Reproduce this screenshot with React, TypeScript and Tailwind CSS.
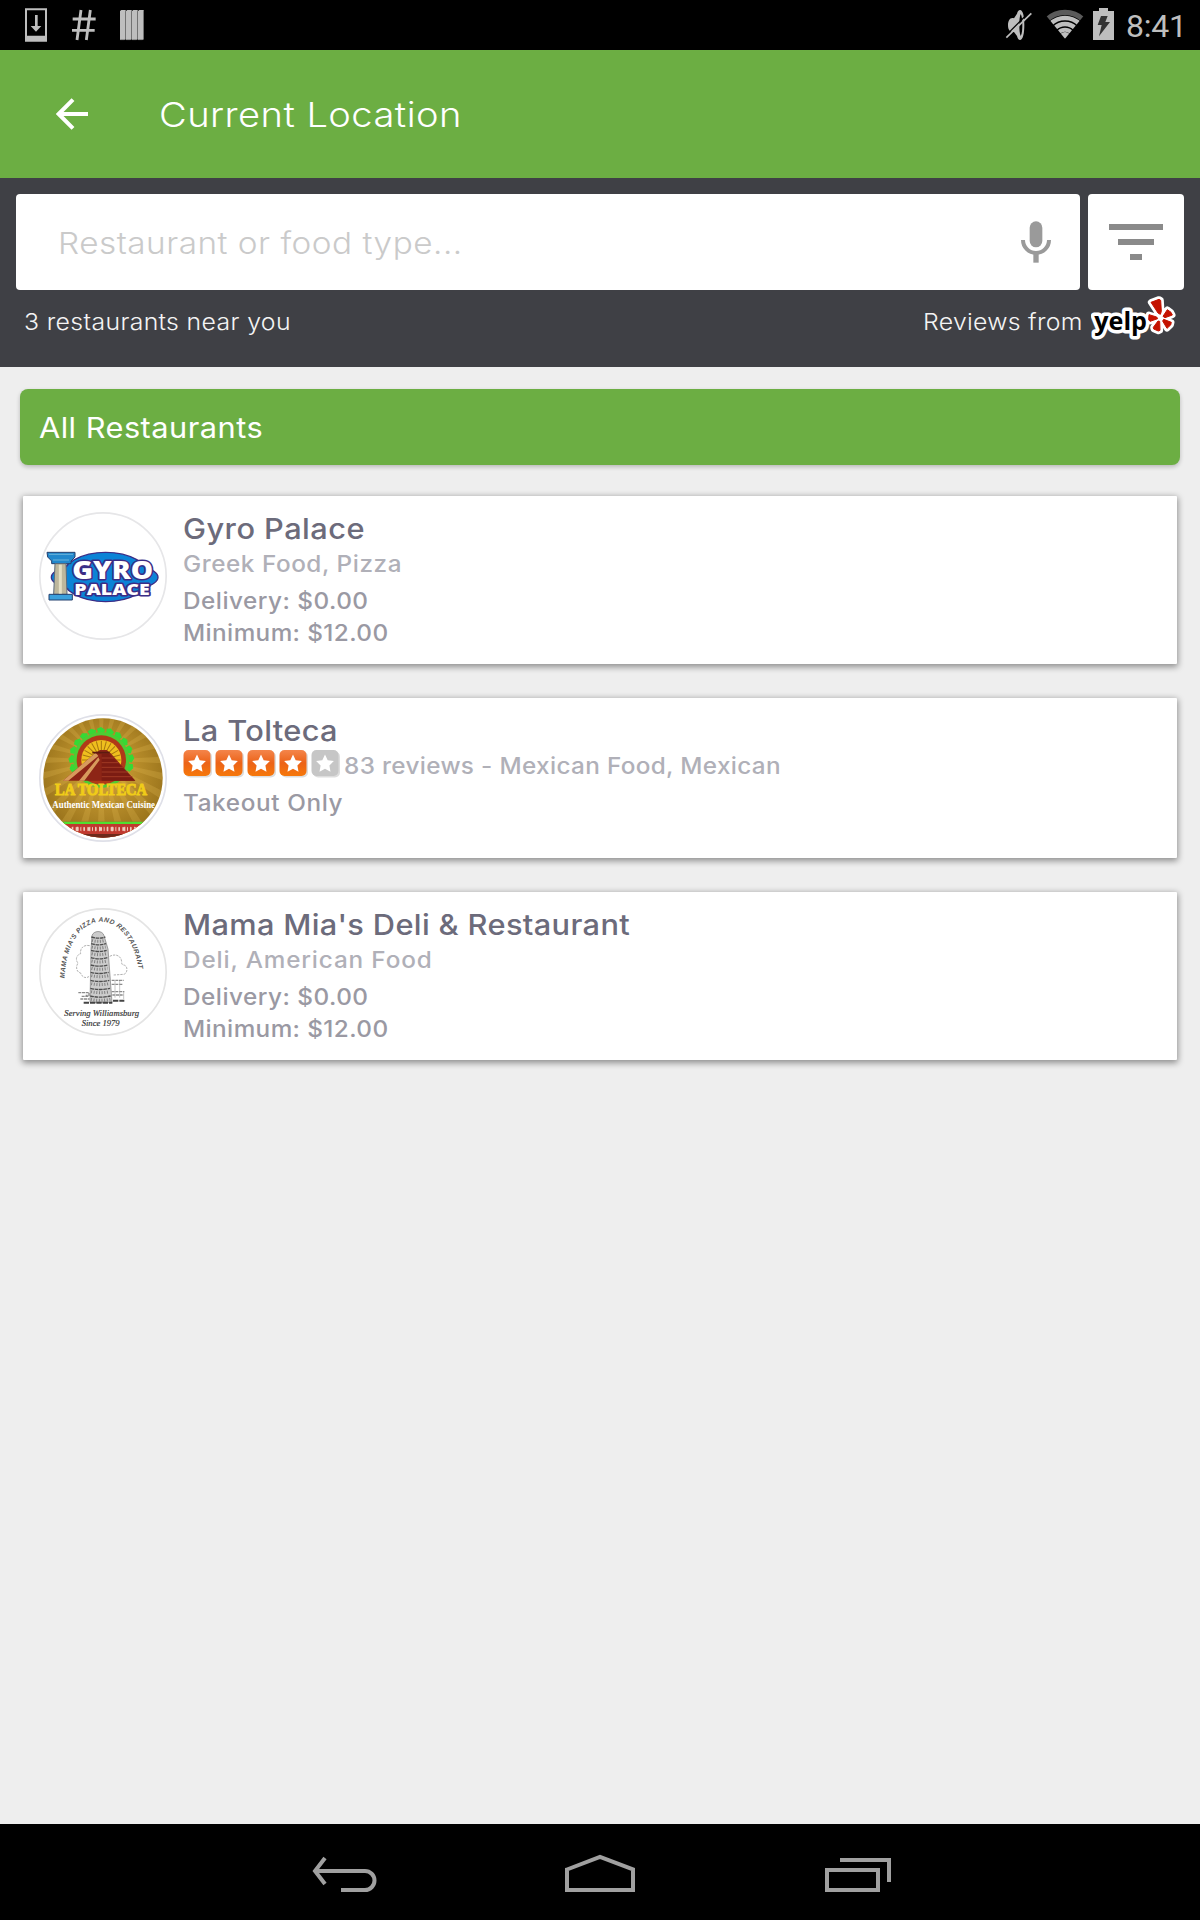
import React from "react";

type Line = { text: string; className: string };
type Restaurant = {
  name: string;
  nameTracking: string;
  logo: React.ReactNode;
  rated?: boolean;
  cuisine: Line;
  details: Line[];
  height: string;
};

function StatusBar() {
  return (
    <div className="flex h-[50px] items-start justify-between bg-black pl-[25px] pr-[17px]">
      <div className="flex items-start pt-2">
        <svg width="22" height="34" viewBox="75 24 66 102" className="mr-[25px]">
          <path fill="#bebebe" fillRule="evenodd" d="M75 25h66v100H75zM81 31v76h54V31z" />
          <path fill="#bebebe" d="M105 45h8v33h11l-16 17-16-17h13z" />
        </svg>
        <svg width="24" height="34" viewBox="216 24 72 102" className="mr-6">
          <path stroke="#bebebe" strokeWidth="8.5" fill="none" d="M243 30l-12 90M271 30l-12 90M218 57h69M216 91h68" />
        </svg>
        <svg width="24" height="34" viewBox="360 24 72 102">
          {[0, 18, 36, 54].map((x) => (
            <g key={x}>
              <path fill="#bebebe" d={`M${360 + x} 33l4-3h13v88l-3 2h-14z`} />
              <path stroke="#6d6d6d" strokeWidth="2" d={`M${376.5 + x} 34v82l-3 3h-13`} fill="none" />
            </g>
          ))}
        </svg>
      </div>
      <div className="flex items-start pt-2">
        <svg width="28" height="34" viewBox="73 24 84 102" className="mr-3">
          <path fill="#bebebe" d="M118 30c9 0 13 20 13 45s-4 45-13 45c-4 0-7-4-9-12l-9-12c-12 1-18-6-18-20s6-25 18-21l9-14c2-7 5-11 9-11z" />
          <path fill="#000" d="M120 42c4 6 5 19 5 33s-1 27-5 33c-3-6-4-19-4-33s1-27 4-33z" />
          <path stroke="#000" strokeWidth="4" d="M73 109l74-74" />
          <path stroke="#bebebe" strokeWidth="5" d="M77 113l75-73" />
        </svg>
        <svg width="40" height="34" viewBox="194 24 120 102" className="mr-2">
          <clipPath id="wifi-fan"><path d="M254 116L190 38V20h128v18z" /></clipPath>
          <g clipPath="url(#wifi-fan)" fill="none">
            <circle cx="254" cy="116" r="79" stroke="#5a5a5a" strokeWidth="16" />
            <circle cx="254" cy="116" r="62" stroke="#bebebe" strokeWidth="14" />
            <circle cx="254" cy="116" r="44" stroke="#bebebe" strokeWidth="14" />
            <circle cx="254" cy="116" r="27" stroke="#bebebe" strokeWidth="12" />
            <circle cx="254" cy="116" r="20" fill="#bebebe" />
          </g>
        </svg>
        <svg width="21" height="34" viewBox="339 24 63 102" className="mr-3">
          <path fill="#bebebe" d="M339 33h18v-9h27v9h18v87h-63z" />
          <path fill="#333" d="M363 48h20l-7 18h14l-33 43 8-34h-12z" />
        </svg>
        <span className="mt-[2px] h-8 w-[57px] whitespace-nowrap font-['Roboto'] text-[32px] leading-8 tracking-[-0.2px] text-[#bebebe]">8:41</span>
      </div>
    </div>
  );
}

function YelpLogo() {
  const petals = "M753 367l24-9 5 3 2 33-3 9-7-4zM747 404l23 7 3 5-23 8-4-5zM789 409l13-20 11 8 4 8-22 8zM791 418l23 9-2 8-11 10-13-22zM779 424l1 27-5 2-14-6-1-5 14-19z";
  return (
    <svg width="86" height="46" viewBox="573 345 258 138">
      <path d={petals} fill="#fff" stroke="#fff" strokeWidth="19" strokeLinejoin="round" />
      <text x="583" y="450" textLength="158" lengthAdjust="spacingAndGlyphs" fontFamily="Open Sans" fontWeight="700" fontSize="75" stroke="#fff" strokeWidth="21" strokeLinejoin="round" paintOrder="stroke" fill="#000">yelp</text>
      <path d={petals} fill="#c41200" stroke="#c41200" strokeWidth="3" strokeLinejoin="round" />
    </svg>
  );
}

function Star({ on }: { on: boolean }) {
  return (
    <svg width="32" height="28" viewBox="0 0 32 28">
      <rect x="2" y="1.5" width="27" height="26" rx="5" fill="#00000022" />
      <rect x="0.5" y="0" width="27" height="26" rx="5" fill={on ? "url(#star-orange)" : "#c6c6c6"} />
      <path fill="#fff" d="M14 4.5l2.7 5.8 6.2.7-4.5 4.4 1.1 6.3-5.5-3-5.5 3 1.1-6.3L5.100 11l6.200-.7z" />
    </svg>
  );
}

function Stars() {
  return (
    <div className="flex h-7 w-[161px]">
      <svg width="0" height="0" className="absolute">
        <linearGradient id="star-orange" x1="0" y1="0" x2="0" y2="1">
          <stop offset="0" stopColor="#f4854b" />
          <stop offset="0.5" stopColor="#ec6318" />
          <stop offset="1" stopColor="#f6780a" />
        </linearGradient>
      </svg>
      {[1, 2, 3, 4, 5].map((n) => (
        <Star key={n} on={n < 5} />
      ))}
    </div>
  );
}

function GyroLogo() {
  return (
    <svg width="128" height="128" viewBox="28 36 384 384">
      <circle cx="220" cy="228" r="189.500" fill="#fff" stroke="#e6e6e8" strokeWidth="5" />
      <ellipse cx="228" cy="231" rx="132" ry="74" fill="#0b83d6" stroke="#3b2d86" strokeWidth="4" />
      <ellipse cx="225" cy="232" rx="160" ry="46" fill="#0b83d6" stroke="#3b2d86" strokeWidth="4" />
      <ellipse cx="228" cy="231" rx="129" ry="71" fill="#0b83d6" />
      <path d="M52 157h84v14l-12 12v8H66v-8l-12-12z" fill="#2288cc" stroke="#24406f" strokeWidth="3" />
      <path d="M58 163h72M70 180h48" stroke="#6cb4da" strokeWidth="3" />
      <path d="M76 191h33l3 92H72z" fill="#bdb79c" stroke="#5b6a7c" strokeWidth="3" />
      <path d="M92 194v88" stroke="#e4dfc4" strokeWidth="9" />
      <path d="M58 283h70v17H58z" fill="#3ba0dc" stroke="#24406f" strokeWidth="3" />
      <g fontFamily="Open Sans" fontWeight="800" fill="#fff" stroke="#3b2d86" strokeWidth="9" strokeLinejoin="round" paintOrder="stroke">
        <text x="128" y="236" fontSize="76" textLength="242" lengthAdjust="spacingAndGlyphs">GYRO</text>
        <text x="134" y="286" fontSize="45" textLength="226" lengthAdjust="spacingAndGlyphs">PALACE</text>
      </g>
    </svg>
  );
}

function ToltecaLogo() {
  const rays = Array.from({ length: 24 }, (_, i) => i * 15);
  const crest = Array.from({ length: 13 }, (_, i) => -105 + i * 17.5);
  return (
    <svg width="128" height="128" viewBox="28 42 384 384">
      <defs>
        <clipPath id="tolteca-disc"><circle cx="220" cy="234" r="179" /></clipPath>
        <radialGradient id="tolteca-gold" cx="0.5" cy="0.45" r="0.55">
          <stop offset="0" stopColor="#d8a93a" />
          <stop offset="1" stopColor="#96701a" />
        </radialGradient>
      </defs>
      <circle cx="220" cy="234" r="189.500" fill="#fff" stroke="#dfe0e8" strokeWidth="5" />
      <g clipPath="url(#tolteca-disc)">
        <rect x="30" y="44" width="380" height="380" fill="url(#tolteca-gold)" />
        {rays.map((a) => (
          <path key={a} d="M215 180l-14-260h28z" fill="#e3bd55" opacity="0.25" transform={`rotate(${a} 215 180)`} />
        ))}
        {crest.map((a) => (
          <path key={a} d="M205 100l-3-14 12-5 13 9-6 12z" fill="#35d935" transform={`rotate(${a} 215 180)`} />
        ))}
        <circle cx="215" cy="180" r="84" fill="#4ecb33" />
        <circle cx="215" cy="180" r="74" fill="#b03a18" />
        <circle cx="215" cy="180" r="60" fill="#efbf1e" />
        {rays.map((a) => (
          <path key={a} d="M215 180v-58" stroke="#a77710" strokeWidth="3" transform={`rotate(${a} 215 180)`} />
        ))}
        <path d="M198 158l13-8h20l12 10 74 82H100z" fill="#8d2516" />
        <path d="M216 162h22l79 80H216z" fill="#7c1c12" />
        <path d="M198 158l-98 84h16l90-74zM206 172l-58 70h16l46-62z" fill="#d79a5c" />
        <path d="M216 174h36M216 188h50M216 202h64M216 216h78M216 230h92" stroke="#a03a24" strokeWidth="3" />
        <path d="M188 158h52" stroke="#5d1a10" strokeWidth="5" />
        <text x="76" y="284" fontFamily="Liberation Serif" fontWeight="700" fontSize="48" textLength="276" lengthAdjust="spacingAndGlyphs" fill="#f0cc18" stroke="#f0cc18" strokeWidth="3">LA TOLTECA</text>
        <text x="68" y="325" fontFamily="Liberation Serif" fontWeight="700" fontSize="28" textLength="308" lengthAdjust="spacingAndGlyphs" fill="#fff">Authentic Mexican Cuisine</text>
        <rect x="30" y="365" width="380" height="60" fill="#c0392f" />
        <rect x="30" y="365" width="380" height="7" fill="#4fe02f" />
        <path d="M126 387h200" stroke="#f0c8bc" strokeWidth="13" strokeDasharray="5 7 9 5 3 6" />
        <path d="M120 380h210M120 394h210" stroke="#c0392f" strokeWidth="3" strokeDasharray="8 5" />
        <rect x="30" y="402" width="380" height="30" fill="#6d2a1c" />
      </g>
    </svg>
  );
}

function MamaMiaLogo() {
  const floors = [126, 146, 166, 188, 210, 232, 256, 280, 303];
  return (
    <svg width="128" height="128" viewBox="28 39 384 384">
      <circle cx="220" cy="231" r="189.500" fill="#fff" stroke="#e4e4e4" strokeWidth="5" />
      <defs>
        <path id="mama-arch" d="M105 250C114 24 312 24 330 250" />
      </defs>
      <text fontFamily="Liberation Sans" fontStyle="italic" fontWeight="700" fontSize="20" fill="#555">
        <textPath href="#mama-arch" textLength="418" lengthAdjust="spacing">MAMA MIA'S PIZZA AND RESTAURANT</textPath>
      </text>
      <path d="M180 152c-18-4-30 8-27 24-14 4-16 20-8 28-8 12-4 28 8 30 4 14 18 18 28 8M240 184c20-10 36 0 36 18 0 6 2 8 6 8 14 2 12 26 0 28l-30 2" fill="none" stroke="#a0a0a0" strokeWidth="2.500" strokeDasharray="7 3" />
      <path d="M187 122c4-16 32-17 36 0l12 40 12 160h-66l3-160z" fill="#cccccc" stroke="#777" strokeWidth="2" />
      {floors.map((y, i) => (
        <g key={y}>
          <path d={`M${185 - i * 0.4} ${y}q${22 + i} 7 ${42 + i * 2.4} 0`} fill="none" stroke="#4d4d4d" strokeWidth="4" strokeDasharray="11 2" />
          <path d={`M${187 - i * 0.4} ${y + 10}q${19 + i} 6 ${39 + i * 2.4} 0`} fill="none" stroke="#808080" strokeWidth="9" strokeDasharray="3 5" />
        </g>
      ))}
      <path d="M146 293h32v8h-10M156 304h20M152 312h28M246 256h36M246 268h34M246 290h38M248 300h34" fill="none" stroke="#8a8a8a" strokeWidth="4" strokeDasharray="9 2" />
      <path d="M256 258v50M270 258v50M282 290v22" stroke="#aaa" strokeWidth="2" />
      <path d="M162 323h86M250 317h34" stroke="#444" strokeWidth="6" strokeDasharray="16 3" />
      <g fontFamily="Liberation Serif" fontStyle="italic" fill="#333" stroke="#333" strokeWidth="0.500">
        <text x="104" y="362" fontSize="25" textLength="224" lengthAdjust="spacingAndGlyphs">Serving Williamsburg</text>
        <text x="156" y="394" fontSize="25" textLength="114" lengthAdjust="spacingAndGlyphs">Since 1979</text>
      </g>
    </svg>
  );
}

const delivery: Line[] = [
  { text: "Delivery: $0.00", className: "h-[37px] leading-[37px] tracking-[0.45px]" },
  { text: "Minimum: $12.00", className: "h-7 leading-7 tracking-[0.37px]" },
];

const restaurants: Restaurant[] = [
  {
    name: "Gyro Palace",
    nameTracking: "tracking-[0.42px]",
    logo: <GyroLogo />,
    cuisine: { text: "Greek Food, Pizza", className: "tracking-[0.5px]" },
    details: delivery,
    height: "h-[168px]",
  },
  {
    name: "La Tolteca",
    nameTracking: "tracking-[0.33px]",
    logo: <ToltecaLogo />,
    rated: true,
    cuisine: { text: "83 reviews - Mexican Food, Mexican", className: "tracking-[0.31px]" },
    details: [{ text: "Takeout Only", className: "h-[37px] leading-[37px] tracking-[0.57px]" }],
    height: "h-[160px]",
  },
  {
    name: "Mama Mia's Deli & Restaurant",
    nameTracking: "tracking-[0.32px]",
    logo: <MamaMiaLogo />,
    cuisine: { text: "Deli, American Food", className: "tracking-[0.78px]" },
    details: delivery,
    height: "h-[168px]",
  },
];

function Card({ r }: { r: Restaurant }) {
  return (
    <article className={`flex gap-4 rounded-[1px] bg-white pl-4 pt-4 shadow-[0_2px_6px_1px_rgba(0,0,0,0.4)] ${r.height}`}>
      <div className="h-32 w-32 shrink-0">{r.logo}</div>
      <div className="flex flex-col items-start whitespace-nowrap pt-px">
        <h2 className={`h-8 origin-left scale-x-[1.08] text-[28.5px] font-medium leading-8 text-[#6c6b7b] ${r.nameTracking}`}>{r.name}</h2>
        <div className="flex items-start">
          {r.rated && (
            <div className="pt-[3px]">
              <Stars />
            </div>
          )}
          <p className={`h-[37px] origin-left scale-x-[1.08] text-[22.5px] font-medium leading-[37px] text-[#b0b0b8] ${r.cuisine.className}`}>{r.cuisine.text}</p>
        </div>
        {r.details.map((d) => (
          <p key={d.text} className={`origin-left scale-x-[1.08] text-[22.5px] font-medium text-[#9a99a3] ${d.className}`}>{d.text}</p>
        ))}
      </div>
    </article>
  );
}

export default function App() {
  return (
    <div className="flex h-[1920px] w-[1200px] flex-col overflow-hidden bg-[#eeeeee] font-['Inter',sans-serif]">
      <StatusBar />

      <header className="flex h-32 items-center bg-[#6cae43] pl-14 text-white">
        <svg width="33" height="32" viewBox="168 294 99 96">
          <path d="M219 299l-43 43 43 43M176 342h88" fill="none" stroke="#fff" strokeWidth="12" />
        </svg>
        <h1 className="ml-[70px] mt-[2px] origin-left scale-x-[1.12] whitespace-nowrap text-[34px] font-[350] leading-10 tracking-[0.4px]">Current Location</h1>
      </header>

      <section className="h-[189px] bg-[#3f4045] px-4 pt-4">
        <div className="flex gap-2">
          <div className="flex h-24 flex-1 items-center justify-between rounded bg-white pl-[42px] pr-[29px]">
            <span className="mt-0.5 origin-left scale-x-[1.11] whitespace-nowrap text-[30px] font-[350] tracking-[0.45px] text-[#cacaca]">Restaurant or food type...</span>
            <svg width="30" height="42" viewBox="363 123 90 126">
              <rect x="389" y="124" width="38" height="78" rx="19" fill="#9a9a9a" />
              <path d="M369 180a39 39 0 0 0 78 0" fill="none" stroke="#9a9a9a" strokeWidth="12" />
              <path d="M400 222h16v26h-16z" fill="#9a9a9a" />
            </svg>
          </div>
          <div className="flex h-24 w-24 flex-col items-center gap-[9px] rounded bg-white pt-[30px]">
            <div className="h-1.5 w-[54px] bg-[#8a8a8a]" />
            <div className="h-1.5 w-9 bg-[#8a8a8a]" />
            <div className="h-1.5 w-3 bg-[#8a8a8a]" />
          </div>
        </div>
        <div className="flex justify-between pl-2 pr-[7px] text-[23px] font-light leading-8 text-[#f4f4f4]">
          <span className="mt-4 origin-left scale-x-[1.08] whitespace-nowrap tracking-[0.32px]">3 restaurants near you</span>
          <div className="flex">
            <span className="mr-[5px] mt-4 w-[163px] origin-left scale-x-[1.08] whitespace-nowrap tracking-[0.25px]">Reviews from</span>
            <div className="pt-[5px]">
              <YelpLogo />
            </div>
          </div>
        </div>
      </section>

      <main className="flex flex-1 flex-col px-5 pt-[22px]">
        <div className="flex h-[76px] items-center rounded-lg bg-[#6cae43] pl-[19px] pt-0.5 text-white shadow-[0_2px_4px_rgba(0,0,0,0.22)]">
          <span className="origin-left scale-x-[1.08] whitespace-nowrap text-[28.5px] tracking-[0.43px]">All Restaurants</span>
        </div>
        <div className="mt-[31px] flex flex-col gap-[34px] px-[3px]">
          {restaurants.map((r) => (
            <Card key={r.name} r={r} />
          ))}
        </div>
      </main>

      <nav className="flex h-24 items-start justify-between bg-black pl-[311px] pr-[308px] pt-[29px]">
        <svg width="66" height="42" viewBox="0 0 66 42" fill="none" stroke="#a0a0a0" strokeWidth="4">
          <path d="M14 5L4 18l10 13M3 18h51a9.500 9.500 0 0 1 0 19H30" />
        </svg>
        <svg width="72" height="42" viewBox="1 0 72 42" fill="none" stroke="#a0a0a0" strokeWidth="4">
          <path d="M3 16.500L36 4l33 12.500V37H3z" />
        </svg>
        <svg width="67" height="42" viewBox="0 0 67 42" fill="none" stroke="#a0a0a0" strokeWidth="4">
          <path d="M2 17h51v20H2zM15 7h49v22" />
        </svg>
      </nav>
    </div>
  );
}
